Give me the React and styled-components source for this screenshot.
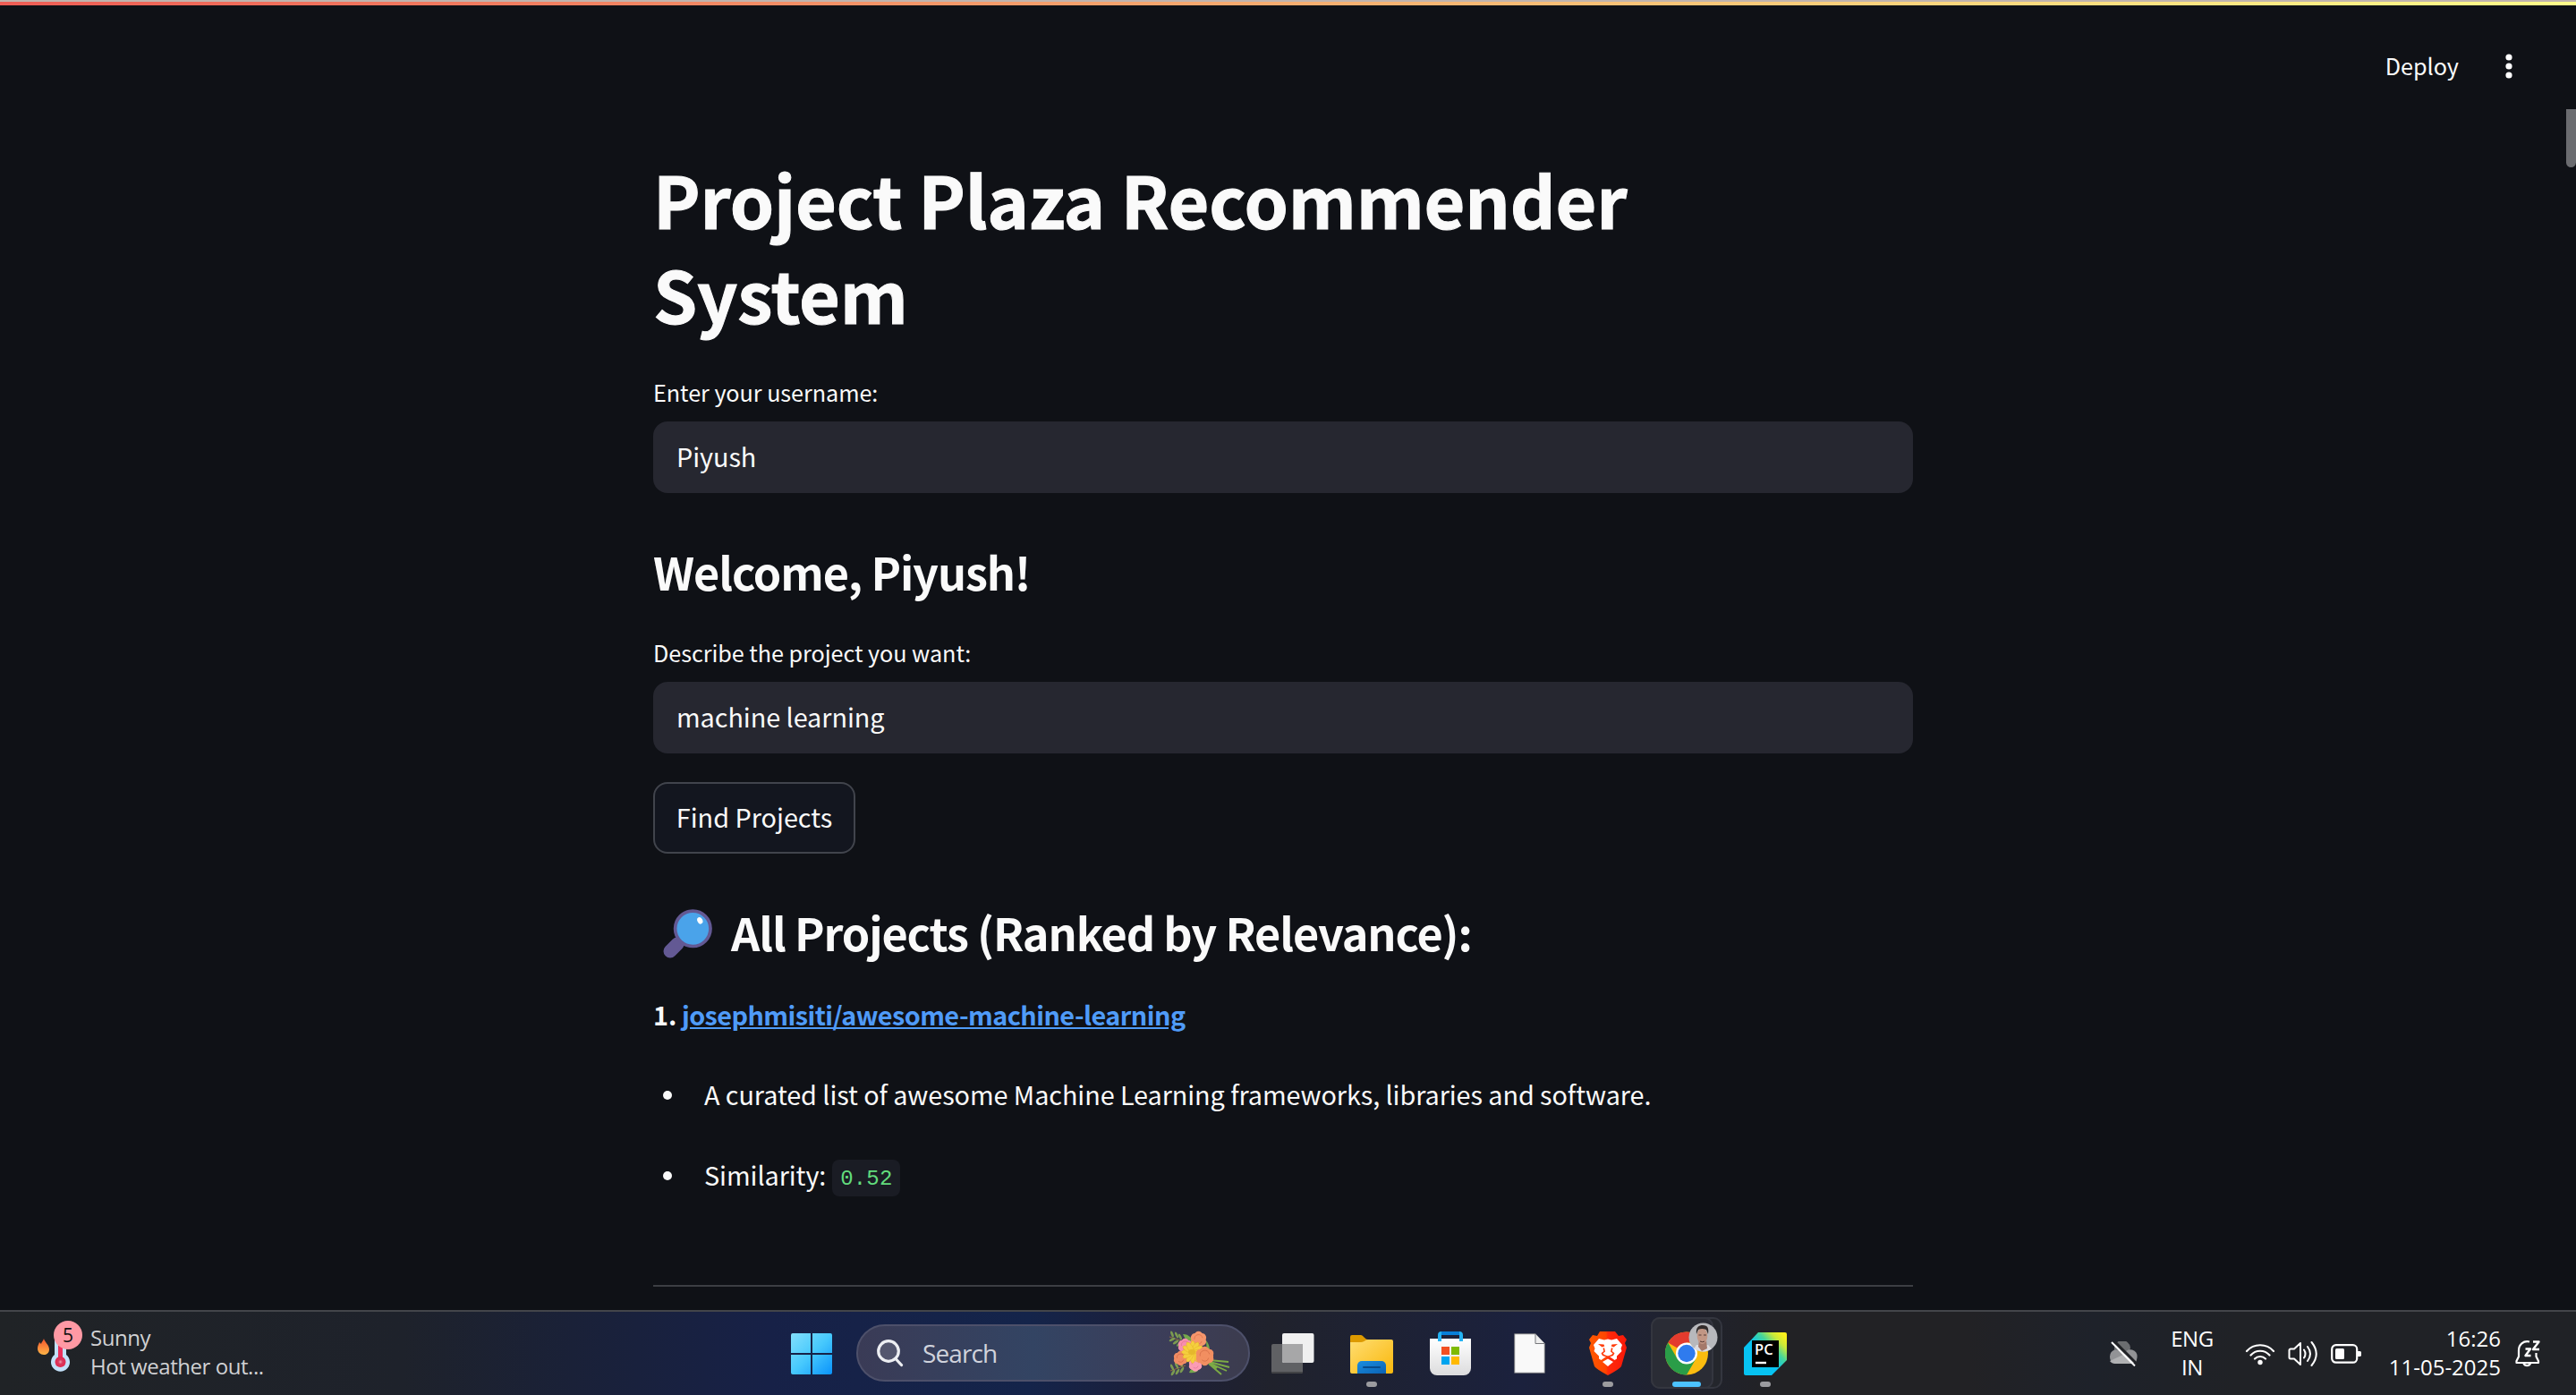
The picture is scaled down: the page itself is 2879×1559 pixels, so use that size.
import React from "react";
import styled, { createGlobalStyle, css } from "styled-components";

const Global = createGlobalStyle`
  * { box-sizing: border-box; }
  html, body { margin: 0; padding: 0; background: #0e1117; overflow: hidden; }
`;

const sans = `"Noto Sans CJK SC", "Open Sans", sans-serif`;
const system = `"Open Sans", "Noto Sans", sans-serif`;

const Screen = styled.div`
  width: 2879px;
  height: 1559px;
  display: flex;
  flex-direction: column;
  background: #0f1116;
  color: #fafafa;
  font-family: ${sans};
  overflow: hidden;
`;

const Decoration = styled.div`
  height: 6px;
  flex: none;
  border-top: 2px solid #c0b4ae;
  background: linear-gradient(90deg, #ee5d55, #fffd8a) padding-box;
`;

const Header = styled.header`
  height: 116px;
  flex: none;
  display: flex;
  justify-content: flex-end;
  align-items: center;
  gap: 52px;
  padding: 20px 71px 0 0;
  font-size: 25.2px;
  span { margin-top: -2px; }
  svg { display: block; }
`;

const Viewport = styled.div`
  flex: 1;
  min-height: 0;
  display: flex;
  justify-content: space-between;
  align-items: flex-start;
`;

const Main = styled.main`
  width: 1408px;
  margin-left: 730px;
  display: flex;
  flex-direction: column;
  align-items: stretch;
  padding-top: 47px;
`;

const ScrollThumb = styled.div`
  width: 11px;
  height: 65px;
  border-radius: 0 0 6px 6px;
  background: #6b6c70;
`;

const Title = styled.h1`
  margin: 0;
  padding: 0 120px 36px 0;
  font-size: 79px;
  line-height: 106px;
  font-weight: 700;
  letter-spacing: -0.18px;
  -webkit-text-stroke: 1px #fafafa;
`;

const Heading = styled.h3`
  margin: 0;
  display: flex;
  align-items: center;
  height: 68px;
  margin-top: ${(p) => p.$top}px;
  margin-bottom: ${(p) => p.$bottom}px;
  font-size: 50.4px;
  line-height: 68px;
  font-weight: 600;
  letter-spacing: -1.12px;
  white-space: pre;
  svg { flex: none; margin: 0 21px 0 10px; }
`;

const Label = styled.label`
  height: 54px;
  font-size: 25.2px;
  line-height: 42px;
  letter-spacing: -0.05px;
`;

const Input = styled.div`
  height: 80px;
  border-radius: 16px;
  background: #262730;
  padding: 0 26px;
  font-size: 28.8px;
  line-height: 78px;
  letter-spacing: -0.05px;
`;

const Button = styled.button`
  width: 226px;
  height: 80px;
  margin-top: 32px;
  padding: 0 0 2px;
  border: 2px solid #41444c;
  border-radius: 16px;
  background: #13161f;
  color: #fafafa;
  font: 28.8px/74px ${sans};
`;

const Project = styled.p`
  margin: 0;
  height: 50px;
  font-size: 28.8px;
  line-height: 50px;
  font-weight: 700;
`;

const Link = styled.a`
  color: #4f9bf8;
  font-weight: 600;
  letter-spacing: -0.54px;
  margin-left: -1px;
  text-decoration: underline;
`;

const List = styled.ul`
  list-style: none;
  margin: 38px 0 0;
  padding: 0 0 0 11px;
  display: flex;
  flex-direction: column;
  gap: 40px;
`;

const Item = styled.li`
  display: flex;
  align-items: center;
  height: 50px;
  font-size: 28.8px;
  letter-spacing: -0.07px;
  white-space: pre;
  &::before {
    content: "";
    width: 10px;
    height: 10px;
    border-radius: 50%;
    background: #fafafa;
    margin: 4px 36px 0 0;
  }
`;

const Code = styled.code`
  margin: 9px 0 0 7px;
  height: 41px;
  padding: 0 9px;
  border-radius: 8px;
  background: #1a1c24;
  color: #62dc7d;
  letter-spacing: 0.15px;
  font: 24px/43px "Liberation Mono", monospace;
`;

const Divider = styled.hr`
  width: 100%;
  height: 2px;
  margin: 99px 0 0;
  border: 0;
  background: #3c3e43;
`;

const Taskbar = styled.footer`
  height: 95px;
  flex: none;
  display: flex;
  align-items: center;
  border-top: 2px solid #43454a;
  background: linear-gradient(90deg, #202326 0, #1e222b 450px, #1a2138 640px, #172147 860px, #14244a 1150px, #1d1f38 1300px, #20222c 1420px, #1b213d 1700px, #222225 1980px, #222225 2200px, #1e222a 2340px, #202226 2500px, #202226);
  font-family: ${system};
`;

const Weather = styled.div`
  width: 863px;
  display: flex;
  align-items: flex-start;
  padding-left: 41px;
  svg { margin-top: -10px; }
`;

const WeatherText = styled.div`
  margin: -3px 0 0 8px;
  font-size: 24px;
  line-height: 32px;
  color: #d0d1d3;
  letter-spacing: -0.45px;
`;

const Apps = styled.div`
  display: flex;
  align-items: center;
  height: 93px;
`;

const AppButton = styled.div`
  width: 88px;
  height: 93px;
  flex: none;
  position: relative;
  display: flex;
  align-items: center;
  justify-content: center;
  svg { position: relative; }
  ${(p) => p.$mark && css`
    &::after {
      content: "";
      position: absolute;
      bottom: 9px;
      left: 50%;
      width: ${p.$mark === "active" ? 32 : 12}px;
      height: 6px;
      border-radius: 3px;
      transform: translateX(-50%);
      background: ${p.$mark === "active" ? "#4cc2ff" : "#9b9b9f"};
    }
  `}
`;

const Frame = styled.div`
  position: absolute;
  inset: 6px ${(p) => p.$right}px 7px 4px;
  border: 2px solid #34363f;
  border-radius: 10px;
  background: ${(p) => p.$fill};
`;

const Avatar = styled.div`
  position: absolute;
  left: 46px;
  top: 12px;
`;

const Search = styled.div`
  width: 440px;
  height: 64px;
  margin: -1px 4px 0 6px;
  display: flex;
  align-items: center;
  border: 2px solid #4d506a;
  border-radius: 32px;
  background: linear-gradient(90deg, #3a3b56, #334463 45%, #3c3d58 80%, #3c3c4e);
  padding: 0 20px 0 21px;
  color: #d0d3dc;
  font-size: 28px;
  span { flex: 1; margin-left: 21px; letter-spacing: -0.9px; }
`;

const Tray = styled.div`
  flex: 1;
  display: flex;
  align-items: center;
  justify-content: flex-end;
  padding-right: 40px;
  font-size: 24px;
  line-height: 32px;
  color: #fff;
`;

const Lang = styled.div`
  width: 48px;
  margin: -1px 35px 0 35px;
  text-align: center;
  letter-spacing: -0.4px;
`;

const Clock = styled.div`
  width: 128px;
  margin: -2px 16px 0 28px;
  text-align: right;
  white-space: nowrap;
`;

const Status = styled.div`
  display: flex;
  align-items: center;
  gap: 14px;
`;

const Dots = () => (
  <svg width="8" height="28" viewBox="0 0 8 28" fill="#fff">
    <circle cx="4" cy="4" r="3.6" /><circle cx="4" cy="14" r="3.6" /><circle cx="4" cy="24" r="3.6" />
  </svg>
);

const Magnifier = () => (
  <svg width="56" height="57" viewBox="0 0 56 57">
    <path d="M9 49 L17 41" stroke="#635994" strokeWidth="15" strokeLinecap="round" />
    <circle cx="34.300" cy="23.800" r="19.700" fill="#4aa3ea" stroke="#635994" strokeWidth="3.700" />
    <ellipse cx="42.300" cy="14.800" rx="2.900" ry="3.900" fill="#fff" transform="rotate(-25 42.300 14.800)" />
  </svg>
);

const WeatherIcon = () => (
  <svg width="52" height="64" viewBox="0 0 52 64">
    <defs>
      <linearGradient id="fire" x1="0" y1="0" x2="0" y2="1"><stop offset="0" stopColor="#f2542d" /><stop offset="1" stopColor="#ffb547" /></linearGradient>
      <radialGradient id="bulb"><stop offset="0" stopColor="#f0a0b0" /><stop offset=".4" stopColor="#d93a60" /><stop offset="1" stopColor="#e0284e" /></radialGradient>
    </defs>
    <path d="M8 24 C9 28 14 31 14 36 C14 40 11 42 8 42 C4 42 1 39 1 35 C1 32 2 31 3 28 L5 30 C5 28 7 27 8 24Z" fill="url(#fire)" />
    <path d="M20 20 h13 v22 a10.500 10.500 0 1 1 -13 0Z" fill="#c3e1fa" />
    <path d="M26.500 24 V48" stroke="#ed315d" strokeWidth="5" />
    <circle cx="26.500" cy="50" r="6" fill="url(#bulb)" />
    <circle cx="35" cy="20" r="16" fill="#ff99a4" />
    <text x="35" y="28" textAnchor="middle" fontSize="21" fontFamily="Open Sans" fill="#111">5</text>
  </svg>
);

const Windows = () => (
  <svg width="46" height="46" viewBox="0 0 47 47">
    <defs><linearGradient id="win" x1="0" y1="0" x2="47" y2="47" gradientUnits="userSpaceOnUse"><stop offset="0" stopColor="#83e0fc" /><stop offset=".5" stopColor="#47c9fd" /><stop offset="1" stopColor="#0a93fb" /></linearGradient></defs>
    <path fill="url(#win)" d="M2 0H22.500V22.500H0V2A2 2 0 0 1 2 0ZM24.500 0H45A2 2 0 0 1 47 2V22.500H24.500ZM0 24.500H22.500V47H2A2 2 0 0 1 0 45ZM24.500 24.500H47V45A2 2 0 0 1 45 47H24.500Z" />
  </svg>
);

const SearchIcon = () => (
  <svg width="30" height="31" viewBox="0 0 30 31" fill="none" stroke="#eceef2" strokeWidth="3.200" strokeLinecap="round">
    <circle cx="13" cy="13" r="11.300" fill="#ffffff22" /><path d="M21 21.500L27.500 28.500" />
  </svg>
);

const peony = (x, y, r, c, d) => (
  <g key={x + "-" + y}>
    <circle cx={x} cy={y} r={r * 0.92} fill={c} />
    {[0, 60, 120, 180, 240, 300].map((a) => <circle key={a} cx={x} cy={y - r * 0.6} r={r * 0.42} fill={c} transform={`rotate(${a} ${x} ${y})`} />)}
    <path d={`M${x - r * 0.5} ${y} a${r * 0.5} ${r * 0.5} 0 0 1 ${r} -${r * 0.2} M${x - r * 0.3} ${y + r * 0.4} a${r * 0.4} ${r * 0.4} 0 0 0 ${r * 0.7} -${r * 0.2}`} fill="none" stroke={d} strokeWidth="1" opacity=".6" />
  </g>
);

const leaf = (x, y, a) => <ellipse key={`${x}${y}${a}`} cx={x} cy={y} rx="3.700" ry="1.400" fill="#7c9b50" transform={`rotate(${a} ${x} ${y})`} />;

const Bouquet = () => (
  <svg width="70" height="52" viewBox="0 0 70 52">
    <path d="M46 34L68 36M47 36L69 42M46 37L66 46M46 38L60 50M44 36L55 43" stroke="#7cab45" strokeWidth="1.900" fill="none" />
    <path d="M2 8L20 14M3 46L20 40" stroke="#8a6a42" strokeWidth="1.200" />
    {[[5, 5, 70], [10, 6, 65], [14, 8, 65], [5, 11, -30], [9, 14, -35], [13, 16, -40], [5, 42, 65], [10, 40, 65], [15, 38, 70], [6, 48, -60], [11, 47, -60], [16, 45, -60]].map((v) => leaf(...v))}
    <path d="M17 5C25 5 30 12 28 18L22 15ZM43 12C48 18 48 26 44 28ZM24 48C26 42 32 43 34 46Q30 49 24 48Z" fill="#75a84b" />
    {peony(34.500, 11, 9, "#f5966c", "#d96640")}
    {peony(19.500, 18, 8, "#f78fae", "#dd6a90")}
    {peony(14.500, 32, 8, "#f08c63", "#cf613d")}
    {peony(31, 39, 7.500, "#fb9cb4", "#e07098")}
    <g fill="#f5cf3e" stroke="#dfae22" strokeWidth=".4">
      {[0, 30, 60, 90, 120, 150, 180, 210, 240, 270, 300, 330].map((a) => <ellipse key={a} cx="28" cy="19" rx="2.800" ry="6.500" transform={`rotate(${a} 28 25)`} />)}
    </g>
    <ellipse cx="27" cy="25" rx="4" ry="3" fill="#e5b82c" />
    {peony(41.500, 29.500, 10.500, "#f28f61", "#c9633d")}
  </svg>
);

const TaskView = () => (
  <svg width="48" height="48" viewBox="0 0 48 48">
    <rect y="13" width="35" height="33" rx="2" fill="#606164" />
    <path d="M0 44H35A2 2 0 0 1 33 46H2A2 2 0 0 1 0 44Z" fill="#434446" />
    <rect x="12" y="1" width="35.500" height="33" rx="2" fill="#f0f0f0" />
    <path d="M12 13H35V34H14A2 2 0 0 1 12 32Z" fill="#a7a7a8" />
  </svg>
);

const Folder = () => (
  <svg width="48" height="45" viewBox="0 0 48 45">
    <defs><linearGradient id="fold" x1="0" y1="0" x2="1" y2="1"><stop offset="0" stopColor="#ffdd72" /><stop offset="1" stopColor="#f9b80c" /></linearGradient>
      <linearGradient id="fb" x1="0" y1="0" x2="1" y2="1"><stop offset="0" stopColor="#1a8ee0" /><stop offset="1" stopColor="#0b62b4" /></linearGradient></defs>
    <path d="M0 4A2 2 0 0 1 2 2H12C15 2 16 7 20 7V12H0Z" fill="#dd9a00" />
    <path d="M0 10H12C16 10 17 7 20 7H46A2 2 0 0 1 48 9V43A2 2 0 0 1 46 45H2A2 2 0 0 1 0 43Z" fill="url(#fold)" />
    <path d="M8 45V36A5 5 0 0 1 13 31H35A5 5 0 0 1 40 36V45Z" fill="url(#fb)" />
    <path d="M15 38H33" stroke="#074b8b" strokeWidth="2" strokeLinecap="round" />
  </svg>
);

const Store = () => (
  <svg width="46" height="49" viewBox="0 0 46 49">
    <defs><linearGradient id="sb" x1="0" y1="0" x2="0" y2="1"><stop offset="0" stopColor="#fff" /><stop offset="1" stopColor="#dcdcdd" /></linearGradient></defs>
    <path d="M0 8H46V41A8 8 0 0 1 38 49H8A8 8 0 0 1 0 41Z" fill="url(#sb)" />
    <path d="M11 11V4A2 2 0 0 1 13 2H33A2 2 0 0 1 35 4V11" fill="none" stroke="#25b3f3" strokeWidth="4" />
    <path d="M13 2H33" stroke="#087fd8" strokeWidth="4" />
    <path fill="#f25022" d="M13 17h9v9h-9z" /><path fill="#7fba00" d="M24 17h9v9h-9z" /><path fill="#00a4ef" d="M13 28h9v9h-9z" /><path fill="#ffb900" d="M24 28h9v9h-9z" />
  </svg>
);

const Doc = () => (
  <svg width="35" height="45" viewBox="0 0 35 45">
    <path d="M.7 .7H24L34.300 11.500V44.300H.7Z" fill="#f9f9f9" stroke="#77787c" /><path d="M24 .7V11.500H34.300" fill="#eee" stroke="#77787c" />
  </svg>
);

const Brave = () => (
  <svg width="42" height="49" viewBox="0 0 42 49">
    <defs><linearGradient id="br"><stop offset="0" stopColor="#ff5a00" /><stop offset=".45" stopColor="#ff4500" /><stop offset=".5" stopColor="#ff2a0a" /><stop offset="1" stopColor="#f81808" /></linearGradient></defs>
    <path fill="url(#br)" d="M12 0H29L33 5L38 4L42 9L40 13L42 18L36 39Q34 42 21 49Q8 42 6 39L0 18L2 13L0 9L4 4L9 5Z" />
    <path fill="#fff" d="M11 8L17 9.500L21 8.500L25 9.500L31 8L37 15L35.500 19L36.500 22L31 27.500V30.500L28.500 32L23.500 28.500L21 27.500L18.500 28.500L13.500 32L11 30.500V27.500L5.500 22L6.500 19L5 15Z" />
    <g fill="#ff3d0c">
      <path d="M10 14L16.500 14.500L17.300 16.500L14.500 17.500ZM32 14L25.500 14.500L24.700 16.500L27.500 17.500Z" />
      <path d="M17 18L18 22.500L15.500 24.500L17 26L21 27.500L25 26L26.500 24.500L24 22.500L25 18L26.500 19L25.700 22L28.500 24.300L27 27L21 29.300L15 27L13.500 24.300L16.300 22L15.500 19Z" />
    </g>
    <path fill="#fff" d="M21 30.500L27 34L21 39L15 34Z" />
  </svg>
);

const Chrome = () => (
  <svg width="48" height="49" viewBox="0 0 48 48">
    <circle cx="24" cy="24" r="24" fill="#fbbc0f" />
    <path d="M24 24L3.200 12A24 24 0 0 1 44.800 12H24Z" fill="#e33b2e" />
    <path d="M3.200 12A24 24 0 0 0 24 48L34.400 30L24 24L13.600 30Z" fill="#2a9d48" />
    <circle cx="24" cy="24" r="12" fill="#fff" /><circle cx="24" cy="24" r="9.700" fill="#2f7bee" />
  </svg>
);

const Face = () => (
  <svg width="33" height="33" viewBox="0 0 33 33">
    <defs><clipPath id="face"><circle cx="16.500" cy="16.500" r="16" /></clipPath></defs>
    <g clipPath="url(#face)">
      <rect width="33" height="33" fill="#b7b8bc" />
      <path d="M4 33L9 25L22 25L29 33Z" fill="#dcdce0" />
      <path d="M12 20H20L21 29L15 32L11 27Z" fill="#a4796a" />
      <ellipse cx="15.500" cy="15" rx="5.800" ry="9" fill="#c29684" />
      <path d="M9 13C8 5 12 3 16 3C22 3 23 7 22 13L20 8Q15 6 11 8Z" fill="#322b2a" />
      <path d="M11.500 14h3M17 14h3M13 21q3 1.500 5 0" stroke="#553a35" strokeWidth="1" fill="none" />
    </g>
  </svg>
);

const PyCharm = () => (
  <svg width="48" height="48" viewBox="0 0 48 48">
    <defs><linearGradient id="pc" x1="10" y1="38" x2="46" y2="4" gradientUnits="userSpaceOnUse"><stop offset=".35" stopColor="#07c3f2" /><stop offset=".62" stopColor="#45d69b" /><stop offset=".82" stopColor="#c9ea3a" /><stop offset="1" stopColor="#fcf01c" /></linearGradient></defs>
    <path d="M16 0H46A2 2 0 0 1 48 2V31L31 48H2A2 2 0 0 1 0 46V17Z" fill="url(#pc)" />
    <rect x="9" y="9" width="30" height="30" fill="#000" />
    <text x="12" y="24.500" fontFamily="Open Sans" fontWeight="600" fontSize="16.500" fill="#fff">PC</text>
    <path d="M13 34H25" stroke="#fff" strokeWidth="2.400" />
  </svg>
);

const Cloud = () => (
  <svg width="36" height="28" viewBox="0 0 36 28">
    <path d="M8 9A9 9 0 0 1 26 7L24 15H5Z" fill="#6b6d70" />
    <path d="M9 9.500A8 8 0 0 0 9 25H27A8 8 0 0 0 28 9.500Q22 8 19 14Q15 9.500 9 9.500Z" fill="#929396" />
    <path d="M3 22L20 14L33 22Q30 25 27 25H9Q5 25 3 22Z" fill="#b0b1b3" />
    <path d="M8 0L35 27" stroke="#202226" strokeWidth="3" /><path d="M5 1L31 27.500" stroke="#fff" strokeWidth="2" />
  </svg>
);

const Wifi = () => (
  <svg width="34" height="26" viewBox="0 0 34 26" fill="none" stroke="#fff" strokeWidth="2.200" strokeLinecap="round">
    <path d="M2 10A20 20 0 0 1 32 10M6.500 14.500A14 14 0 0 1 27.500 14.500M11 18.500A8.500 8.500 0 0 1 23 18.500" /><circle cx="17" cy="22.500" r="2.700" fill="#fff" stroke="none" />
  </svg>
);

const Sound = () => (
  <svg width="34" height="30" viewBox="0 0 34 30" fill="none" stroke="#fff" strokeWidth="2" strokeLinecap="round" strokeLinejoin="round">
    <path d="M14 3V27L7 20.500H3A1.500 1.500 0 0 1 1.500 19V11A1.500 1.500 0 0 1 3 9.500H7ZM18 10.500Q21 15 18 19.500M22 7Q28 15 22 23M26.500 2Q37 15 26.500 28" />
  </svg>
);

const Battery = () => (
  <svg width="34" height="24" viewBox="0 0 34 24">
    <rect x="1.200" y="2.200" width="28" height="19.500" rx="4.500" fill="none" stroke="#fff" strokeWidth="2.200" /><rect x="5" y="6" width="10" height="12" rx="1.500" fill="#fff" /><path d="M30 9H32A2 2 0 0 1 34 10V14A2 2 0 0 1 32 15H30Z" fill="#fff" />
  </svg>
);

const Bell = () => (
  <svg width="28" height="30" viewBox="0 0 28 30" fill="none" stroke="#fff" strokeWidth="2.200" strokeLinejoin="round">
    <path d="M16 1.500C9 0 4 5 4 11V18L1.500 23V25H26V23L23.500 18V14M9.500 25.500A4 4 0 0 0 17 25.500" /><path d="M11.500 9.500H17L11.500 17H17.500M20 1.500H26.500L20 10H27" strokeWidth="2.400" />
  </svg>
);

export default function App() {
  return (
    <Screen>
      <Global />
      <Decoration />
      <Header><span>Deploy</span><Dots /></Header>
      <Viewport>
        <Main>
          <Title>Project Plaza Recommender System</Title>
          <Label>Enter your username:</Label>
          <Input>Piyush</Input>
          <Heading $top={54} $bottom={35}>Welcome, Piyush!</Heading>
          <Label>Describe the project you want:</Label>
          <Input>machine learning</Input>
          <Button>Find Projects</Button>
          <Heading $top={54} $bottom={33}><Magnifier />All Projects (Ranked by Relevance):</Heading>
          <Project>1. <Link>josephmisiti/awesome-machine-learning</Link></Project>
          <List>
            <Item>A curated list of awesome Machine Learning frameworks, libraries and software.</Item>
            <Item>Similarity:<Code>0.52</Code></Item>
          </List>
          <Divider />
        </Main>
        <ScrollThumb />
      </Viewport>
      <Taskbar>
        <Weather><WeatherIcon /><WeatherText><div>Sunny</div><div>Hot weather out...</div></WeatherText></Weather>
        <Apps>
          <AppButton><Windows /></AppButton>
          <Search><SearchIcon /><span>Search</span><Bouquet /></Search>
          <AppButton><TaskView /></AppButton>
          <AppButton $mark="open"><Folder /></AppButton>
          <AppButton><Store /></AppButton>
          <AppButton><Doc /></AppButton>
          <AppButton $mark="open"><Brave /></AppButton>
          <AppButton $mark="active">
            <Frame $right={4} $fill="#24262c" />
            <Frame $right={14} $fill="#2a2c35" />
            <Chrome />
            <Avatar><Face /></Avatar>
          </AppButton>
          <AppButton $mark="open"><PyCharm /></AppButton>
        </Apps>
        <Tray>
          <Cloud />
          <Lang>ENG<br />IN</Lang>
          <Status><Wifi /><Sound /><Battery /></Status>
          <Clock>16:26<br />11-05-2025</Clock>
          <Bell />
        </Tray>
      </Taskbar>
    </Screen>
  );
}
